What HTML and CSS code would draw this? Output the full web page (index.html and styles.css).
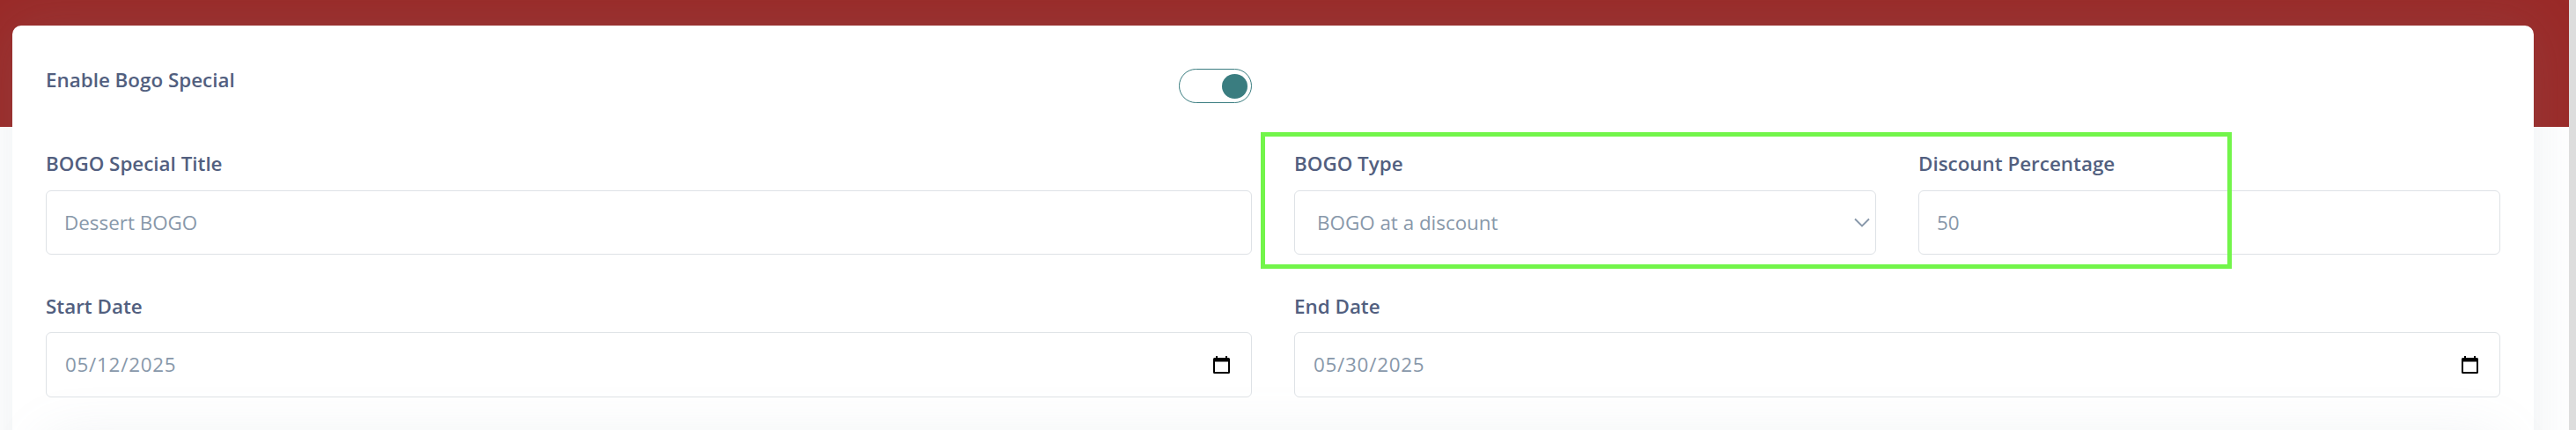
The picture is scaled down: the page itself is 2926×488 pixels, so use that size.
FILE: index.html
```html
<!DOCTYPE html>
<html lang="en">
<head>
  <meta charset="UTF-8">
  <title>Bogo Special</title>
  <link rel="stylesheet" href="styles.css">
</head>
<body>

  <div class="page">
    <div class="header-bg"></div>

    <div class="card">
      <div class="row row-enable">
        <div class="toggle-col">
          <label class="form-label">Enable Bogo Special</label>
          <div class="toggle"><span class="toggle-knob"></span></div>
        </div>
      </div>

      <div class="row row-title">
        <div class="form-group">
          <label class="form-label">BOGO Special Title</label>
          <div class="form-control">Dessert BOGO</div>
        </div>
        <div class="row">
          <div class="form-group">
            <label class="form-label">BOGO Type</label>
            <div class="form-control select">
              <span>BOGO at a discount</span>
              <svg class="chevron" width="18" height="12" viewBox="0 0 18 12"><path d="M1 1.5 9 9.5 17 1.5" fill="none" stroke="#8898aa" stroke-width="1.9"/></svg>
            </div>
          </div>
          <div class="form-group">
            <label class="form-label">Discount Percentage</label>
            <div class="form-control">50</div>
          </div>
        </div>
        <div class="highlight"></div>
      </div>

      <div class="row">
        <div class="form-group">
          <label class="form-label">Start Date</label>
          <div class="form-control date">
            <span>05/12/2025</span>
            <svg class="calendar" width="19" height="20" viewBox="0 0 19 20"><path fill-rule="evenodd" d="M3 0h2v2h9V0h2v2h1.500a1.500 1.500 0 0 1 1.500 1.500v15a1.500 1.500 0 0 1-1.500 1.500h-16a1.500 1.500 0 0 1-1.500-1.500v-15A1.500 1.500 0 0 1 1.500 2H3zM2 6.500V18h15V6.500z"/></svg>
          </div>
        </div>
        <div class="form-group">
          <label class="form-label">End Date</label>
          <div class="form-control date">
            <span>05/30/2025</span>
            <svg class="calendar" width="19" height="20" viewBox="0 0 19 20"><path fill-rule="evenodd" d="M3 0h2v2h9V0h2v2h1.500a1.500 1.500 0 0 1 1.500 1.500v15a1.500 1.500 0 0 1-1.500 1.500h-16a1.500 1.500 0 0 1-1.500-1.500v-15A1.500 1.500 0 0 1 1.500 2H3zM2 6.500V18h15V6.500z"/></svg>
          </div>
        </div>
      </div>

      <div class="inner-card"></div>
    </div>
  </div>
  <div class="scroll-track"></div>

</body>
</html>
```

FILE: styles.css
```css
* {
  box-sizing: border-box;
}

body {
  margin: 0;
  height: 488px;
  display: flex;
  overflow: hidden;
  background: #fff;
  font-family: "Open Sans", sans-serif;
  font-size: 22.4px;
  line-height: 34px;
}

.page {
  position: relative;
  flex: 1;
  overflow: hidden;
  padding: 29px 40px 0 14px;
}

.header-bg {
  position: absolute;
  top: 0;
  left: 0;
  right: 0;
  height: 144px;
  background: #9a2a28;
}

.scroll-track {
  width: 8px;
  background: #dddddd;
}

.card {
  position: relative;
  height: 600px;
  padding: 45px 38px 0;
  background: #fff;
  border-radius: 10px;
  box-shadow: 0 0 64px rgba(136, 152, 170, 0.15);
}

.row {
  display: grid;
  grid-template-columns: 1fr 1fr;
  column-gap: 48px;
}

.row-enable {
  height: 95px;
}

.row-title {
  position: relative;
  margin-bottom: 42px;
}

.toggle-col {
  display: flex;
  justify-content: space-between;
  align-items: flex-start;
}

.form-label {
  display: block;
  color: #525f7f;
  font-weight: 600;
}

.form-control {
  display: flex;
  align-items: center;
  justify-content: space-between;
  height: 73px;
  margin-top: 13px;
  padding: 0 20px;
  border: 1px solid #dee2e6;
  border-radius: 6px;
  color: #8898aa;
}

.select {
  padding: 0 6px 0 25px;
}

.date {
  height: 74px;
  margin-top: 12px;
  padding: 0 24px 0 21px;
  letter-spacing: 0.75px;
}

.toggle {
  display: flex;
  justify-content: flex-end;
  width: 83px;
  height: 39px;
  margin-top: 4px;
  padding: 5px 4px;
  border: 1px solid #3a7d80;
  border-radius: 20px;
}

.toggle-knob {
  width: 29px;
  height: 28px;
  border-radius: 50%;
  background: #3a7d80;
}

/* green frame over the type and discount fields */
.highlight {
  position: absolute;
  top: -19px;
  left: 1380px;
  width: 1103px;
  height: 155px;
  border: 5px solid #72f54a;
}

.inner-card {
  height: 100px;
  margin-top: 48px;
  border-radius: 10px;
  box-shadow: 0 0 64px rgba(136, 152, 170, 0.15);
}
```
